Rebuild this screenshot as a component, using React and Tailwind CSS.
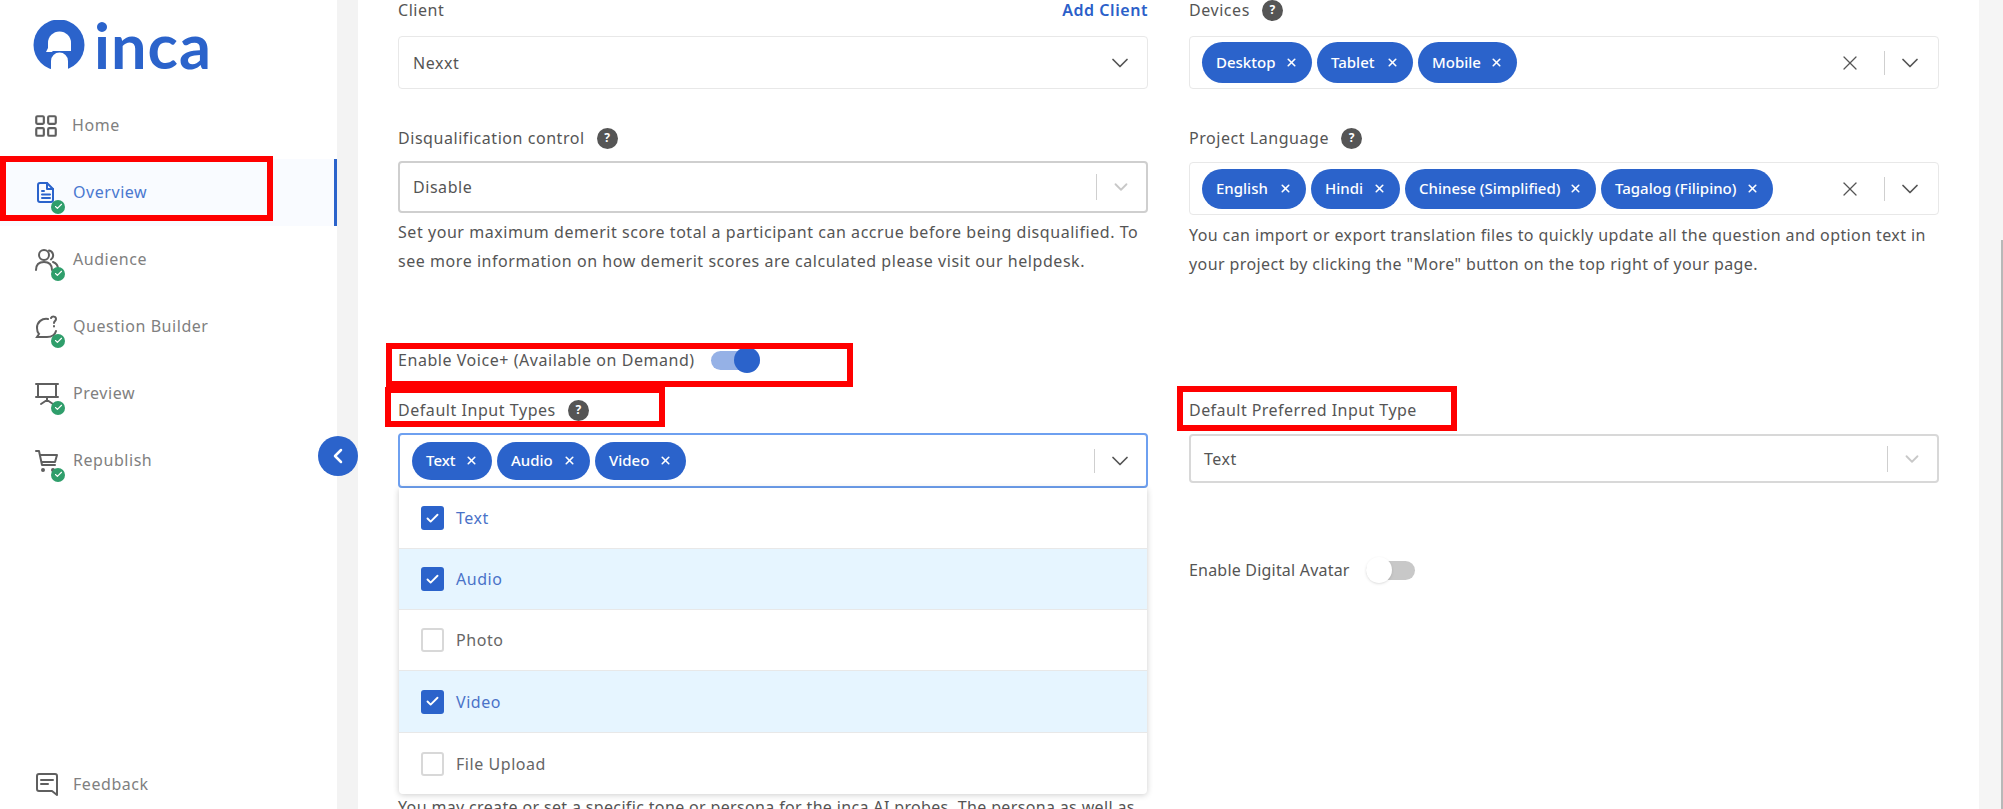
import { LayoutGrid, X, ChevronDown, ChevronLeft, Check } from 'lucide-react'

const font = { fontFamily: '"Noto Sans", sans-serif' }

// small green tick that sits on the nav icons
const Done = () => (
    <span className="absolute left-[16px] top-[19px] flex h-[14px] w-[14px] items-center justify-center rounded-full bg-[#2f9e6b]">
        <Check size={9} strokeWidth={3} color="#ffffff" />
    </span>
)

const FileIcon = () => (
    <svg width="22" height="24" viewBox="0 0 22 24" fill="none" stroke="#2b63cb" strokeWidth="2" strokeLinejoin="round" strokeLinecap="round">
        <path d="M3 4a2 2 0 0 1 2-2h7l6 6v11a2 2 0 0 1-2 2H5a2 2 0 0 1-2-2z" />
        <path d="M12 2v6h6M7 10h2M7 13.5h8M7 17h8" />
    </svg>
)

const AudienceIcon = () => (
    <svg width="24" height="24" viewBox="0 0 24 24" fill="none" stroke="#5f5f5f" strokeWidth="2" strokeLinecap="round">
        <circle cx="9" cy="7" r="5" />
        <path d="M1 22c0-5 3-8 8-8s8 3 8 8M14 2.5a5 5 0 0 1 2 9M18 14c3 1 5 4 5 7" />
    </svg>
)

const QuestionIcon = () => (
    <svg width="24" height="24" viewBox="0 0 24 24" fill="none" stroke="#5f5f5f" strokeWidth="2" strokeLinecap="round">
        <path d="M13 4c-6-1-11 3-11 9 0 3 1 5 2 6l-2 3h10c4 0 8-2 9-6" />
        <path d="M16 3c1-2 5-2 5 1 0 2-2 2-2 4M19 11v.5" />
    </svg>
)

const PreviewIcon = () => (
    <svg width="24" height="24" viewBox="0 0 24 24" fill="none" stroke="#5f5f5f" strokeWidth="2" strokeLinecap="round">
        <path d="M1 2h22M3 2v13h18V2M1 15h22M12 15v3M12 18l-6 4M12 18l6 4" />
    </svg>
)

const CartIcon = () => (
    <svg width="24" height="24" viewBox="0 0 24 24" fill="none" stroke="#5f5f5f" strokeWidth="2" strokeLinecap="round" strokeLinejoin="round">
        <path d="M1 2h3l3 14h13M5 6h17l-2 7H7" />
        <circle cx="8" cy="21" r="1" />
        <circle cx="18" cy="21" r="1" />
    </svg>
)

const FeedbackIcon = () => (
    <svg width="24" height="24" viewBox="0 0 24 24" fill="none" stroke="#5f5f5f" strokeWidth="2" strokeLinecap="round" strokeLinejoin="round">
        <path d="M4 2h16a2 2 0 0 1 2 2v19l-5-4H4a2 2 0 0 1-2-2V4a2 2 0 0 1 2-2z" />
        <path d="M6 8h12M6 12h7" />
    </svg>
)

const navItems = [
    { label: 'Audience', icon: <AudienceIcon />, done: true },
    { label: 'Question Builder', icon: <QuestionIcon />, done: true },
    { label: 'Preview', icon: <PreviewIcon />, done: true },
    { label: 'Republish', icon: <CartIcon />, done: true },
]

const NavRow = ({ item }) => (
    <div className="flex h-[67px] items-center pl-[35px] text-[#808080]">
        <span className="relative flex h-[24px] w-[38px]">
            {item.icon}
            {item.done && <Done />}
        </span>
        <span className="-mt-[2px]">{item.label}</span>
    </div>
)

const Help = () => (
    <span className="ml-[12px] flex h-[21px] w-[21px] items-center justify-center rounded-full bg-[#555555] text-[12px] font-bold tracking-normal text-white">?</span>
)

const Chip = ({ label, className }) => (
    <span className={`flex items-center justify-between rounded-full bg-[#2b63cb] text-[15px] font-medium tracking-normal text-white ${className}`}>
        {label}
        <X size={13} strokeWidth={3} />
    </span>
)

const Toggle = ({ on }) => (
    <span className={`relative ml-[16px] h-[19px] w-[49px] rounded-full ${on ? 'bg-[#95b1e6]' : 'bg-[#c8c8c8]'}`}>
        <span className={`absolute top-[-4px] h-[26px] w-[26px] rounded-full ${on ? 'right-0 bg-[#2b63cb]' : 'left-0 bg-white shadow'}`} />
    </span>
)

const Option = ({ label, checked, className }) => (
    <div className={`flex items-center border-b border-[#e8e8e8] pl-[22px] ${checked ? 'text-[#4a72c8]' : 'text-[#666666]'} ${className}`}>
        <span className={`mr-[12px] flex h-[24px] w-[23px] items-center justify-center rounded-[3px] ${checked ? 'bg-[#2b63cb]' : 'border-2 border-[#d8d8d8] bg-white'}`}>
            {checked && <Check size={15} strokeWidth={3} color="#ffffff" />}
        </span>
        {label}
    </div>
)

const RedBox = ({ className }) => (
    <div className={`pointer-events-none absolute border-[6px] border-[#ff0000] ${className}`} />
)

export default function App() {
    return (
        <div className="relative flex h-[809px] w-[2003px] overflow-hidden bg-white text-[16px] tracking-[0.55px] text-[#555555]" style={font}>
            {/* sidebar */}
            <aside className="flex w-[337px] shrink-0 flex-col">
                <div className="flex h-[92px] items-start pl-[33px] pt-[20px]">
                    <svg width="52" height="50" viewBox="0 0 52 50" className="shrink-0">
                        <circle cx="26" cy="25" r="25.5" fill="#2b63cb" />
                        <path d="M15 31V23a11.5 11.5 0 0 1 23 0v8z" fill="#ffffff" />
                        <path d="M15 28l-2 4h7z" fill="#ffffff" />
                        <path d="M18 50V41a8.5 8.5 0 0 1 17 0v9z" fill="#ffffff" />
                    </svg>
                    <span className="ml-[9px] text-[63px] font-bold leading-[50px] tracking-[1px] text-[#2b63cb]" style={{ fontFamily: 'Lato, sans-serif' }}>inca</span>
                </div>
                <div className="flex h-[67px] items-center pl-[35px] text-[#808080]">
                    <LayoutGrid size={26} strokeWidth={2} color="#5f5f5f" className="mr-[13px] -ml-[2px]" />
                    <span className="-mt-[2px]">Home</span>
                </div>
                <div className="flex h-[67px] items-center border-r-[3px] border-[#2b63cb] bg-[#f9fbff] pl-[35px] text-[#4a78d0]">
                    <span className="relative flex h-[24px] w-[38px]">
                        <FileIcon />
                        <Done />
                    </span>
                    <span className="-mt-[2px]">Overview</span>
                </div>
                {navItems.map((item) => (
                    <NavRow key={item.label} item={item} />
                ))}
                <div className="mt-auto flex h-[37px] items-start pl-[35px] text-[#808080]">
                    <span className="mr-[14px]"><FeedbackIcon /></span>
                    <span>Feedback</span>
                </div>
            </aside>
            <div className="w-[21px] shrink-0 bg-[#f3f3f3]" />

            {/* form columns */}
            <main className="flex flex-1 gap-[41px] px-[40px]">
                <div className="w-[750px] shrink-0">
                    <div className="flex h-[20px] items-center justify-between">
                        <span>Client</span>
                        <span className="font-semibold text-[#2b5fc9]">Add Client</span>
                    </div>
                    <div className="mt-[16px] flex h-[53px] items-center justify-between rounded border border-[#e8e8e8] pl-[14px] pr-[13px]">
                        <span>Nexxt</span>
                        <ChevronDown size={28} strokeWidth={1.5} color="#555555" />
                    </div>

                    <div className="mt-[39px] flex h-[20px] items-center">
                        <span>Disqualification control</span>
                        <Help />
                    </div>
                    <div className="mt-[13px] flex h-[52px] items-center rounded border-2 border-[#cfcfcf] pl-[13px] pr-[14px]">
                        <span className="flex-1">Disable</span>
                        <span className="h-[26px] w-px bg-[#cfcfcf]" />
                        <ChevronDown size={22} strokeWidth={2} color="#c8c8c8" className="ml-[13px]" />
                    </div>
                    <p className="mt-[5px] leading-[28.5px]">Set your maximum demerit score total a participant can accrue before being disqualified. To see more information on how demerit scores are calculated please visit our helpdesk.</p>

                    <div className="mt-[72px] flex h-[26px] items-center">
                        <span>Enable Voice+ (Available on Demand)</span>
                        <Toggle on />
                    </div>
                    <div className="mt-[27px] flex h-[20px] items-center">
                        <span>Default Input Types</span>
                        <Help />
                    </div>
                    <div className="mt-[13px] flex h-[55px] items-center rounded border-2 border-[#6ea0f0] pl-[12px] pr-[12px]">
                        <div className="flex flex-1 gap-[5px]">
                            <Chip label="Text" className="h-[38px] w-[80px] px-[14px]" />
                            <Chip label="Audio" className="h-[38px] w-[93px] px-[14px]" />
                            <Chip label="Video" className="h-[38px] w-[91px] px-[14px]" />
                        </div>
                        <span className="h-[24px] w-px bg-[#cfcfcf]" />
                        <ChevronDown size={28} strokeWidth={1.5} color="#555555" className="ml-[11px]" />
                    </div>
                    <div className="mx-px rounded-b bg-white shadow-[0_1px_6px_rgba(0,0,0,0.2)]">
                        <Option label="Text" checked className="h-[61px]" />
                        <Option label="Audio" checked className="h-[61px] bg-[#e6f5ff]" />
                        <Option label="Photo" className="h-[61px]" />
                        <Option label="Video" checked className="h-[62px] bg-[#e6f5ff]" />
                        <Option label="File Upload" className="h-[61px] border-b-0" />
                    </div>
                    <p className="whitespace-nowrap leading-[26px] tracking-[0.35px]">You may create or set a specific tone or persona for the inca AI probes. The persona as well as</p>
                </div>

                <div className="w-[750px] shrink-0">
                    <div className="flex h-[20px] items-center">
                        <span>Devices</span>
                        <Help />
                    </div>
                    <div className="mt-[16px] flex h-[53px] items-center rounded border border-[#e8e8e8] pl-[12px] pr-[14px]">
                        <div className="flex flex-1 gap-[5px]">
                            <Chip label="Desktop" className="h-[41px] w-[110px] px-[14px]" />
                            <Chip label="Tablet" className="h-[41px] w-[96px] px-[14px]" />
                            <Chip label="Mobile" className="h-[41px] w-[99px] px-[14px]" />
                        </div>
                        <X size={24} strokeWidth={1.25} color="#555555" />
                        <span className="ml-[22px] h-[24px] w-px bg-[#cfcfcf]" />
                        <ChevronDown size={28} strokeWidth={1.5} color="#555555" className="ml-[11px]" />
                    </div>

                    <div className="mt-[39px] flex h-[20px] items-center">
                        <span>Project Language</span>
                        <Help />
                    </div>
                    <div className="mt-[14px] flex h-[53px] items-center rounded border border-[#e8e8e8] pl-[12px] pr-[14px]">
                        <div className="flex flex-1 gap-[5px]">
                            <Chip label="English" className="h-[40px] w-[104px] px-[14px]" />
                            <Chip label="Hindi" className="h-[40px] w-[89px] px-[14px]" />
                            <Chip label="Chinese (Simplified)" className="h-[40px] w-[191px] px-[14px]" />
                            <Chip label="Tagalog (Filipino)" className="h-[40px] w-[172px] px-[14px]" />
                        </div>
                        <X size={24} strokeWidth={1.25} color="#555555" />
                        <span className="ml-[22px] h-[24px] w-px bg-[#cfcfcf]" />
                        <ChevronDown size={28} strokeWidth={1.5} color="#555555" className="ml-[11px]" />
                    </div>
                    <p className="mt-[6px] leading-[28.5px] tracking-[0.4px]">You can import or export translation files to quickly update all the question and option text in your project by clicking the "More" button on the top right of your page.</p>

                    <div className="mt-[122px] h-[20px] leading-[20px] tracking-[0.45px]">Default Preferred Input Type</div>
                    <div className="mt-[14px] flex h-[49px] items-center rounded border-2 border-[#d8d8d8] pl-[13px] pr-[14px]">
                        <span className="flex-1">Text</span>
                        <span className="h-[26px] w-px bg-[#cfcfcf]" />
                        <ChevronDown size={22} strokeWidth={2} color="#c8c8c8" className="ml-[13px]" />
                    </div>
                    <div className="mt-[74px] flex h-[26px] items-center tracking-[0.2px]">
                        <span>Enable Digital Avatar</span>
                        <Toggle />
                    </div>
                </div>
            </main>
            <div className="relative w-[24px] shrink-0 bg-[#f5f5f5]">
                <div className="absolute bottom-0 right-0 top-[240px] w-[2px] bg-[#b8b8b8]" />
            </div>

            {/* things that sit over the page */}
            <button className="absolute left-[318px] top-[436px] flex h-[40px] w-[40px] items-center justify-center rounded-full bg-[#2b63cb] text-white">
                <ChevronLeft size={24} strokeWidth={2.5} />
            </button>
            <RedBox className="left-0 top-[156px] h-[65px] w-[273px]" />
            <RedBox className="left-[386px] top-[343px] h-[44px] w-[467px]" />
            <RedBox className="left-[385px] top-[387px] h-[40px] w-[280px]" />
            <RedBox className="left-[1177px] top-[386px] h-[45px] w-[280px]" />
        </div>
    )
}
